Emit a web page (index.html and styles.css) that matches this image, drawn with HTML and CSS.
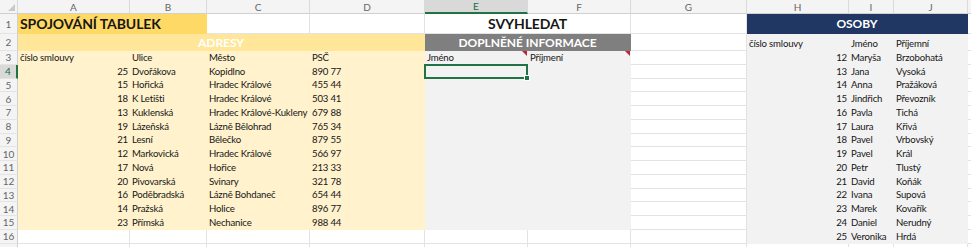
FILE: index.html
```html
<!DOCTYPE html>
<html lang="cs">

<head>
  <meta charset="UTF-8" />
  <meta name="viewport" content="width=device-width, initial-scale=1.0" />
  <title>Spojování tabulek</title>
  <link rel="stylesheet" href="styles.css">
</head>

<body>
  <div class="sheet">
    <!-- column headers -->
    <div class="hd corner"></div>
    <div class="hd">A</div>
    <div class="hd">B</div>
    <div class="hd">C</div>
    <div class="hd">D</div>
    <div class="hd active-col">E</div>
    <div class="hd">F</div>
    <div class="hd">G</div>
    <div class="hd">H</div>
    <div class="hd">I</div>
    <div class="hd">J</div>
    <div class="hd"></div>

    <!-- row 1 -->
    <div class="rn">1</div>
    <div class="c gold title span2">SPOJOVÁNÍ TABULEK</div>
    <div class="c"></div>
    <div class="c"></div>
    <div class="c white-merge title center span2">SVYHLEDAT</div>
    <div class="c"></div>
    <div class="c navy band center span3">OSOBY</div>
    <div class="c"></div>

    <!-- row 2 -->
    <div class="rn">2</div>
    <div class="c sand band center span4">ADRESY</div>
    <div class="c grey band center span2">DOPLNĚNÉ INFORMACE</div>
    <div class="c"></div>
    <div class="c pale">číslo smlouvy</div>
    <div class="c pale">Jméno</div>
    <div class="c pale">Příjemní</div>
    <div class="c"></div>

    <!-- row 3 -->
    <div class="rn">3</div>
    <div class="c cream">číslo smlouvy</div>
    <div class="c cream">Ulice</div>
    <div class="c cream">Město</div>
    <div class="c cream">PSČ</div>
    <div class="c pale note">Jméno</div>
    <div class="c pale note">Příjmení</div>
    <div class="c"></div>
    <div class="c pale num">12</div>
    <div class="c pale">Maryša</div>
    <div class="c pale">Brzobohatá</div>
    <div class="c"></div>

    <!-- row 4 -->
    <div class="rn active-row">4</div>
    <div class="c cream num">25</div>
    <div class="c cream">Dvořákova</div>
    <div class="c cream">Kopidlno</div>
    <div class="c cream">890 77</div>
    <div class="c pale selected"></div>
    <div class="c pale"></div>
    <div class="c"></div>
    <div class="c pale num">13</div>
    <div class="c pale">Jana</div>
    <div class="c pale">Vysoká</div>
    <div class="c"></div>

    <!-- row 5 -->
    <div class="rn">5</div>
    <div class="c cream num">15</div>
    <div class="c cream">Hořická</div>
    <div class="c cream">Hradec Králové</div>
    <div class="c cream">455 44</div>
    <div class="c pale"></div>
    <div class="c pale"></div>
    <div class="c"></div>
    <div class="c pale num">14</div>
    <div class="c pale">Anna</div>
    <div class="c pale">Pražáková</div>
    <div class="c"></div>

    <!-- row 6 -->
    <div class="rn">6</div>
    <div class="c cream num">18</div>
    <div class="c cream">K Letišti</div>
    <div class="c cream">Hradec Králové</div>
    <div class="c cream">503 41</div>
    <div class="c pale"></div>
    <div class="c pale"></div>
    <div class="c"></div>
    <div class="c pale num">15</div>
    <div class="c pale">Jindřich</div>
    <div class="c pale">Převozník</div>
    <div class="c"></div>

    <!-- row 7 -->
    <div class="rn">7</div>
    <div class="c cream num">13</div>
    <div class="c cream">Kuklenská</div>
    <div class="c cream">Hradec Králové-Kukleny</div>
    <div class="c cream">679 88</div>
    <div class="c pale"></div>
    <div class="c pale"></div>
    <div class="c"></div>
    <div class="c pale num">16</div>
    <div class="c pale">Pavla</div>
    <div class="c pale">Tichá</div>
    <div class="c"></div>

    <!-- row 8 -->
    <div class="rn">8</div>
    <div class="c cream num">19</div>
    <div class="c cream">Lázeňská</div>
    <div class="c cream">Lázně Bělohrad</div>
    <div class="c cream">765 34</div>
    <div class="c pale"></div>
    <div class="c pale"></div>
    <div class="c"></div>
    <div class="c pale num">17</div>
    <div class="c pale">Laura</div>
    <div class="c pale">Křivá</div>
    <div class="c"></div>

    <!-- row 9 -->
    <div class="rn">9</div>
    <div class="c cream num">21</div>
    <div class="c cream">Lesní</div>
    <div class="c cream">Bělečko</div>
    <div class="c cream">879 55</div>
    <div class="c pale"></div>
    <div class="c pale"></div>
    <div class="c"></div>
    <div class="c pale num">18</div>
    <div class="c pale">Pavel</div>
    <div class="c pale">Vrbovský</div>
    <div class="c"></div>

    <!-- row 10 -->
    <div class="rn">10</div>
    <div class="c cream num">12</div>
    <div class="c cream">Markovická</div>
    <div class="c cream">Hradec Králové</div>
    <div class="c cream">566 97</div>
    <div class="c pale"></div>
    <div class="c pale"></div>
    <div class="c"></div>
    <div class="c pale num">19</div>
    <div class="c pale">Pavel</div>
    <div class="c pale">Král</div>
    <div class="c"></div>

    <!-- row 11 -->
    <div class="rn">11</div>
    <div class="c cream num">17</div>
    <div class="c cream">Nová</div>
    <div class="c cream">Hořice</div>
    <div class="c cream">213 33</div>
    <div class="c pale"></div>
    <div class="c pale"></div>
    <div class="c"></div>
    <div class="c pale num">20</div>
    <div class="c pale">Petr</div>
    <div class="c pale">Tlustý</div>
    <div class="c"></div>

    <!-- row 12 -->
    <div class="rn">12</div>
    <div class="c cream num">20</div>
    <div class="c cream">Pivovarská</div>
    <div class="c cream">Svinary</div>
    <div class="c cream">321 78</div>
    <div class="c pale"></div>
    <div class="c pale"></div>
    <div class="c"></div>
    <div class="c pale num">21</div>
    <div class="c pale">David</div>
    <div class="c pale">Koňák</div>
    <div class="c"></div>

    <!-- row 13 -->
    <div class="rn">13</div>
    <div class="c cream num">16</div>
    <div class="c cream">Poděbradská</div>
    <div class="c cream">Lázně Bohdaneč</div>
    <div class="c cream">654 44</div>
    <div class="c pale"></div>
    <div class="c pale"></div>
    <div class="c"></div>
    <div class="c pale num">22</div>
    <div class="c pale">Ivana</div>
    <div class="c pale">Supová</div>
    <div class="c"></div>

    <!-- row 14 -->
    <div class="rn">14</div>
    <div class="c cream num">14</div>
    <div class="c cream">Pražská</div>
    <div class="c cream">Holice</div>
    <div class="c cream">896 77</div>
    <div class="c pale"></div>
    <div class="c pale"></div>
    <div class="c"></div>
    <div class="c pale num">23</div>
    <div class="c pale">Marek</div>
    <div class="c pale">Kovařík</div>
    <div class="c"></div>

    <!-- row 15 -->
    <div class="rn">15</div>
    <div class="c cream num">23</div>
    <div class="c cream">Přímská</div>
    <div class="c cream">Nechanice</div>
    <div class="c cream">988 44</div>
    <div class="c pale"></div>
    <div class="c pale"></div>
    <div class="c"></div>
    <div class="c pale num">24</div>
    <div class="c pale">Daniel</div>
    <div class="c pale">Nerudný</div>
    <div class="c"></div>

    <!-- row 16 -->
    <div class="rn">16</div>
    <div class="c"></div>
    <div class="c"></div>
    <div class="c"></div>
    <div class="c"></div>
    <div class="c"></div>
    <div class="c"></div>
    <div class="c"></div>
    <div class="c pale num">25</div>
    <div class="c pale">Veronika</div>
    <div class="c pale">Hrdá</div>
    <div class="c"></div>

    <!-- row 17, only its top edge is in view -->
    <div class="rn"></div>
    <div class="c"></div>
    <div class="c"></div>
    <div class="c"></div>
    <div class="c"></div>
    <div class="c"></div>
    <div class="c"></div>
    <div class="c"></div>
    <div class="c"></div>
    <div class="c"></div>
    <div class="c"></div>
    <div class="c"></div>
  </div>
</body>

</html>
```

FILE: styles.css
```css
body {
  margin: 0;
  background: white;
  font-family: Lato, 'Open Sans', sans-serif;
  color: #161616;
}

.sheet {
  display: grid;
  grid-template-columns: 18px 112px 77px 103px 115px 103px 103px 116px 102px 45px 74px 1fr;
  grid-template-rows: 14px 20px 17px repeat(14, 13.75px) 20px;
  height: 247px;
  overflow: hidden;
  font-size: 9.6px;
  letter-spacing: -0.18px;
}

.hd {
  background: #f4f4f4;
  border-right: 1px solid #dadada;
  border-bottom: 1px solid #d0d0d0;
  color: #666;
  font-size: 10px;
  letter-spacing: 0;
  display: flex;
  align-items: center;
  justify-content: center;
}

.corner {
  position: relative;
}

.corner::after {
  content: "";
  position: absolute;
  right: 2px;
  bottom: 2px;
  border-left: 7px solid transparent;
  border-bottom: 7px solid #c9c9c9;
}

.active-col {
  background: #d9d9d9;
  color: #1e6b41;
  border-bottom: 2px solid #217346;
}

.rn {
  background: #f4f4f4;
  border-right: 1px solid #d0d0d0;
  border-bottom: 1px solid #e4e4e4;
  color: #666;
  font-size: 10px;
  letter-spacing: 0;
  display: flex;
  align-items: center;
  justify-content: center;
}

.active-row {
  background: #d9d9d9;
  color: #1e6b41;
  border-right: 2px solid #217346;
}

.c {
  border-right: 1px solid #e3e3e3;
  border-bottom: 1px solid #e3e3e3;
  padding: 0 2px 1px;
  display: flex;
  align-items: flex-end;
  white-space: nowrap;
  min-width: 0;
}

.num {
  justify-content: flex-end;
  padding-right: 1px;
}

.center {
  justify-content: center;
}

.span2 { grid-column: span 2; }
.span3 { grid-column: span 3; }
.span4 { grid-column: span 4; }

.title {
  font-weight: bold;
  font-size: 14px;
  letter-spacing: -0.1px;
  align-items: center;
  padding-bottom: 0;
}

.band {
  font-weight: bold;
  font-size: 12px;
  letter-spacing: -0.05px;
  color: white;
  align-items: center;
  padding-bottom: 0;
}

.gold {
  background: #ffd966;
  border-color: #ffd966;
}

.sand {
  background: #ffe699;
  border-color: #ffe699;
}

.cream {
  background: #fff2cc;
  border-color: #fff2cc;
}

.grey {
  background: #7f7f7f;
  border-color: #7f7f7f;
}

.pale {
  background: #f2f2f2;
  border-color: #f2f2f2;
}

.navy {
  background: #203764;
  border-color: #203764;
}

.white-merge {
  background: white;
}

.note {
  position: relative;
}

.note::after {
  content: "";
  position: absolute;
  top: 0;
  right: 0;
  border-left: 5px solid transparent;
  border-top: 5px solid #c0272d;
}

.selected {
  position: relative;
}

.selected::before {
  content: "";
  position: absolute;
  left: -1px;
  top: -1px;
  right: -1px;
  bottom: -1px;
  border: 2px solid #217346;
}

.selected::after {
  content: "";
  position: absolute;
  right: -3px;
  bottom: -3px;
  width: 4px;
  height: 4px;
  background: #217346;
  border: 1px solid white;
}
```
